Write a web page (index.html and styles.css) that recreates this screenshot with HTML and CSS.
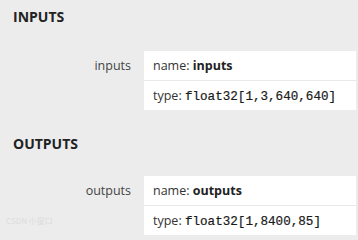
FILE: index.html
```html
<!DOCTYPE html>
<html>
<head>
<meta charset="utf-8">
<link rel="stylesheet" href="styles.css">
</head>
<body>
<div class="page">
  <h2 class="title title-in">INPUTS</h2>
  <div class="row">
    <div class="label">inputs</div>
    <div class="box">
      <div class="cell">name:&nbsp;<b>inputs</b></div>
      <div class="cell">type:&nbsp;<code>float32[1,3,640,640]</code></div>
    </div>
  </div>
  <h2 class="title title-out">OUTPUTS</h2>
  <div class="row">
    <div class="label">outputs</div>
    <div class="box">
      <div class="cell">name:&nbsp;<b>outputs</b></div>
      <div class="cell">type:&nbsp;<code>float32[1,8400,85]</code></div>
    </div>
  </div>
  <div class="watermark">CSDN 小窗口</div>
</div>
</body>
</html>
```
FILE: styles.css
```css
html, body {
  margin: 0;
  padding: 0;
  background: #ececec;
}
body {
  font-family: "Open Sans", "Noto Sans", sans-serif;
  color: #333;
  font-size: 12.5px;
}
.page {
  position: relative;
  width: 358px;
  height: 240px;
  overflow: hidden;
  padding-right: 2px;
  box-sizing: border-box;
}
.title {
  margin: 0;
  padding-left: 13px;
  font-size: 14px;
  line-height: 20px;
  font-weight: 700;
  color: #222;
}
.title-in {
  padding-top: 7px;
  margin-bottom: 24px;
}
.title-out {
  margin-top: 24px;
  margin-bottom: 22px;
}
.row {
  display: flex;
}
.label {
  width: 131px;
  padding-right: 13px;
  text-align: right;
  line-height: 29px;
  color: #444;
  font-size: 12.5px;
}
.box {
  flex: 1;
  background: #fff;
}
.cell {
  height: 29px;
  line-height: 29px;
  padding-left: 9px;
  white-space: nowrap;
}
.cell + .cell {
  border-top: 1px solid #e8e8e8;
}
.cell b {
  color: #222;
  font-weight: 700;
}
.cell code {
  font-family: "Liberation Mono", "DejaVu Sans Mono", monospace;
  font-size: 12.6px;
  color: #1a1a1a;
  -webkit-text-stroke: 0.2px #1a1a1a;
}
.watermark {
  position: absolute;
  left: 6px;
  bottom: 14px;
  font-size: 8px;
  color: #dcdcdc;
  font-family: "Noto Sans CJK SC", sans-serif;
}
```
